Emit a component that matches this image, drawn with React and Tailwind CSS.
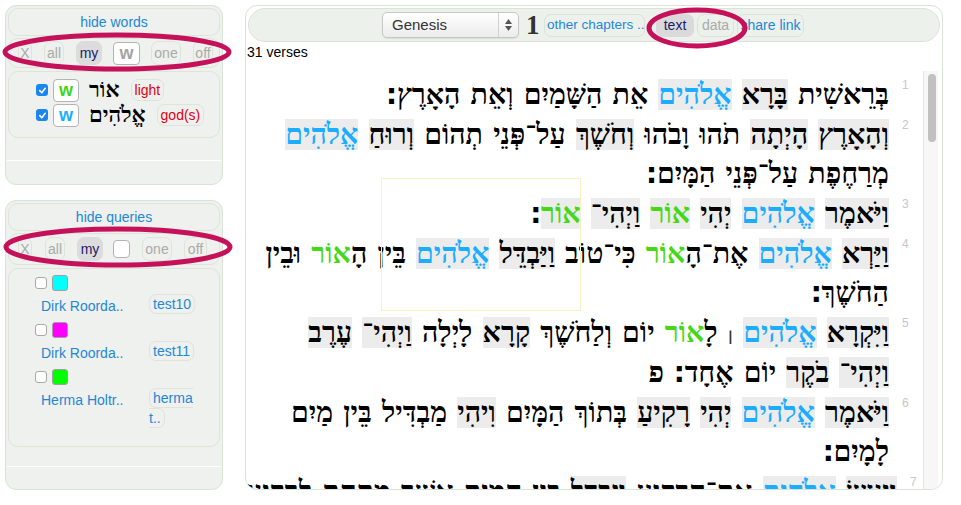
import React from 'react';

const HEB = "font-['Liberation_Serif','DejaVu_Sans',serif]";

// each word: parts split by '|', flag prefix: g = gray bg, b = blue, n = green
const lines = [
    { v: 1, w: ['בְּרֵאשִׁית', 'g:בָּרָא', 'gb:אֱלֹהִים', 'אֵת', 'הַשָּׁמַיִם', 'וְאֵת', 'הָאָרֶץ׃'] },
    { v: 2, w: ['g:וְהָאָרֶץ', 'g:הָיְתָה', 'תֹהוּ', 'וָבֹהוּ', 'g:וְחֹשֶׁךְ', 'עַל־פְּנֵי', 'תְהוֹם', 'g:וְרוּחַ', 'gb:אֱלֹהִים'] },
    { w: ['מְרַחֶפֶת', 'עַל־פְּנֵי', 'הַמָּיִם׃'] },
    { v: 3, w: ['g:וַיֹּאמֶר', 'gb:אֱלֹהִים', 'g:יְהִי', 'gn:אוֹר', 'g:וַיְהִי־', 'gn:אוֹר|׃'] },
    { v: 4, w: ['g:וַיַּרְא', 'gb:אֱלֹהִים', 'אֶת־הָ|n:אוֹר', 'כִּי־טוֹב', 'g:וַיַּבְדֵּל', 'gb:אֱלֹהִים', 'בֵּין', 'הָ|n:אוֹר', 'וּבֵין'] },
    { w: ['הַחֹשֶׁךְ׃'] },
    { v: 5, w: ['g:וַיִּקְרָא', 'gb:אֱלֹהִים', '׀', 'לָ|n:אוֹר', 'יוֹם', 'וְלַחֹשֶׁךְ', 'g:קָרָא', 'לָיְלָה', 'g:וַיְהִי־', 'g:עֶרֶב'] },
    { w: ['g:וַיְהִי־', 'g:בֹקֶר', 'יוֹם', 'אֶחָד׃', 'פ'] },
    { v: 6, w: ['g:וַיֹּאמֶר', 'gb:אֱלֹהִים', 'g:יְהִי', 'g:רָקִיעַ', 'בְּתוֹךְ', 'הַמָּיִם', 'g:וִיהִי', 'מַבְדִּיל', 'בֵּין', 'מַיִם'] },
    { w: ['לָמָיִם׃'] },
    { v: 7, w: ['g:וַיַּעַשׂ', 'gb:אֱלֹהִים', 'אֶת־הָרָקִיעַ', 'g:וַיַּבְדֵּל', 'בֵּין', 'הַמַּיִם', 'אֲשֶׁר', 'מִתַּחַת', 'לָרָקִיעַ'] },
];

const queries = [
    { color: 'bg-[#00ffff]', name: 'Dirk Roorda..', q: 'test10' },
    { color: 'bg-[#ff00ff]', name: 'Dirk Roorda..', q: 'test11' },
    { color: 'bg-[#00ff00]', name: 'Herma Holtr..', q: 'herma t..' },
];

// sof pasuq and paseq are missing / oversized in Liberation Serif
const punct = (t) => t.split(/([׃׀])/).map((s, i) => {
    if (s === '׃') return <span key={i} className="font-['DejaVu_Sans'] font-bold">{s}</span>;
    if (s === '׀') return <span key={i} className="font-['DejaVu_Sans'] font-normal text-[18px] text-[#333]">{s}</span>;
    return s;
});

const Part = ({ text }) => {
    const i = text.indexOf(':');
    const flags = i > -1 ? text.slice(0, i) : '';
    const t = i > -1 ? text.slice(i + 1) : text;
    let cls = '';
    if (flags.includes('g')) cls += ' bg-[#ececec]';
    if (flags.includes('b')) cls += ' text-[#1dadff]';
    if (flags.includes('n')) cls += ' text-[#46d818]';
    return <span className={cls}>{punct(t)}</span>;
};

const Word = ({ w }) => (
    <span>{w.split('|').map((p, i) => <Part key={i} text={p} />)}</span>
);

const Check = ({ on }) => on ? (
    <span className="w-[12px] h-[12px] rounded-[3px] bg-[#1b86f1] flex items-center justify-center">
        <svg width="9" height="9" viewBox="0 0 10 10"><path d="M2 5.2 L4.2 7.4 L8 2.6" fill="none" stroke="white" strokeWidth="1.8" strokeLinecap="round" strokeLinejoin="round" /></svg>
    </span>
) : (
    <span className="w-[12px] h-[12px] rounded-[3px] bg-white border border-[#a9a9a9]" />
);

const Tiny = ({ w, children, active }) => (
    <span className={`h-[24px] ${w} rounded-[7px] border flex items-center justify-center text-[14px] ${active ? 'bg-[#dcdcdc] border-[#dcdcdc] text-[#1b1b6a]' : 'border-[#dde5da] text-[#aaaaaa]'}`}>
        {children}
    </span>
);

const Panel = ({ title, h, children, lineGap }) => (
    <div className={`${h} rounded-[11px] border border-[#d9e3d6] bg-[#eef1ed] p-[2px] flex flex-col`}>
        <div className="h-[28px] rounded-[10px] border border-[#dde5da] flex items-center justify-center text-[14px] text-[#1f87d6]">{title}</div>
        {children}
        <div className={`${lineGap} h-px bg-white mx-[-1px]`} />
    </div>
);

export default function App() {
    return (
        <div className="relative w-[961px] h-[505px] bg-white overflow-hidden font-['Liberation_Sans',Arial,sans-serif] text-black">
            <div className="flex pt-[5px] pl-[5px]">
                {/* left column */}
                <div className="w-[218px] flex flex-col gap-[15px]">
                    <Panel title="hide words" h="h-[180px]" lineGap="mt-[22px]">
                        <div className="mt-[2px] h-[30px] rounded-[10px] border border-[#dde5da] flex items-center pl-[9px]">
                            <Tiny w="w-[14px]">X</Tiny>
                            <span className="ml-[12px]"><Tiny w="w-[20px]">all</Tiny></span>
                            <span className="ml-[12px]"><Tiny w="w-[26px]" active>my</Tiny></span>
                            <span className="ml-[11px] w-[27px] h-[23px] bg-white border border-[#b4b4b4] rounded-[4px] flex items-center justify-center text-[18px] font-bold text-[#a3a3a3]">w</span>
                            <span className="ml-[11px]"><Tiny w="w-[30px]">one</Tiny></span>
                            <span className="ml-[12px]"><Tiny w="w-[20px]">off</Tiny></span>
                        </div>
                        <div className="mt-[3px] h-[67px] rounded-[10px] border border-[#dde5da] pt-[6px] pl-[27px] flex flex-col gap-[1px]">
                            {[
                                { c: 'text-[#3fd31c]', he: 'אוֹר', g: 'light' },
                                { c: 'text-[#1dadff]', he: 'אֱלֹהִים', g: 'god(s)' },
                            ].map((r, i) => (
                                <div key={i} className="h-[24px] flex items-center">
                                    <Check on />
                                    <span className={`ml-[5px] w-[26px] h-[23px] bg-white border border-[#b4b4b4] rounded-[4px] flex items-center justify-center text-[18px] font-bold ${r.c}`}>w</span>
                                    <span dir="rtl" className={`ml-[10px] ${HEB} font-bold text-[22px] leading-none`}>{r.he}</span>
                                    <span className="ml-[11px] h-[22px] px-[3px] rounded-[7px] border border-[#dde5da] flex items-center text-[14px] text-[#e4000f]">{r.g}</span>
                                </div>
                            ))}
                        </div>
                    </Panel>

                    <Panel title="hide queries" h="h-[290px]" lineGap="mt-[19px]">
                        <div className="mt-[2px] h-[32px] rounded-[10px] border border-[#dde5da] flex items-center pl-[9px]">
                            <Tiny w="w-[14px]">X</Tiny>
                            <span className="ml-[13px]"><Tiny w="w-[20px]">all</Tiny></span>
                            <span className="ml-[12px]"><Tiny w="w-[26px]" active>my</Tiny></span>
                            <span className="ml-[10px] w-[17px] h-[18px] bg-white border border-[#b4b4b4] rounded-[4px]" />
                            <span className="ml-[12px]"><Tiny w="w-[30px]">one</Tiny></span>
                            <span className="ml-[12px]"><Tiny w="w-[23px]">off</Tiny></span>
                        </div>
                        <div className="mt-[3px] h-[179px] rounded-[10px] border border-[#dde5da] pt-[6px]">
                            {queries.map((q, i) => (
                                <div key={i} className="mb-[5px]">
                                    <div className="h-[16px] flex items-center pl-[26px]">
                                        <Check />
                                        <span className={`ml-[5px] w-[16px] h-[16px] rounded-[3px] border border-[#a0a0a0] ${q.color}`} />
                                    </div>
                                    <div className="mt-[3px] flex pl-[32px] text-[14px] text-[#1f87d6]">
                                        <span className="w-[108px] leading-[22px] pt-[1px]">{q.name}</span>
                                        <span className="w-[46px] leading-[20px]">
                                            <span className="border border-[#dde5da] rounded-[7px] px-[3px] py-[1px]">{q.q}</span>
                                        </span>
                                    </div>
                                </div>
                            ))}
                        </div>
                    </Panel>
                </div>

                {/* main panel */}
                <div className="ml-[22px] w-[698px] h-[485px] border border-[#d9e3d6] rounded-[12px] flex flex-col overflow-hidden">
                    <div className="mx-[2px] mt-[2px] h-[34px] rounded-[17px] bg-[#edf1ec] border border-[#dae3d7] flex items-center pl-[133px]">
                        <div className="w-[137px] h-[26px] rounded-[5px] border border-[#c6c6c6] bg-gradient-to-b from-white to-[#ececec] flex items-center shadow-[0_1px_1px_rgba(0,0,0,0.08)]">
                            <span className="flex-1 pl-[9px] text-[15px] text-[#333]">Genesis</span>
                            <span className="w-[20px] h-full border-l border-[#d2d2d2] flex flex-col items-center justify-center gap-[2px]">
                                <svg width="7" height="5" viewBox="0 0 7 5"><path d="M3.5 0 L7 5 L0 5 Z" fill="#555" /></svg>
                                <svg width="7" height="5" viewBox="0 0 7 5"><path d="M0 0 L7 0 L3.5 5 Z" fill="#555" /></svg>
                            </span>
                        </div>
                        <span className="ml-[7px] w-[13px] font-['Liberation_Serif',serif] font-bold text-[27px] leading-none text-[#333]">1</span>
                        <span className="ml-[5px] w-[101px] h-[23px] px-[2px] rounded-[7px] border border-[#dae3d7] flex items-center whitespace-nowrap text-[13.5px] text-[#1f87d6]">other chapters ..</span>
                        <span className="ml-[11px] h-[23px] w-[38px] rounded-[7px] bg-[#dadada] flex items-center justify-center text-[14px] text-[#1b1b6a]">text</span>
                        <span className="ml-[3px] h-[23px] w-[37px] rounded-[7px] border border-[#dae3d7] flex items-center justify-center text-[14px] text-[#aaaaaa]">data</span>
                        <span className="ml-[3px] h-[23px] w-[67px] rounded-[7px] border border-[#dae3d7] flex items-center justify-center whitespace-nowrap text-[14px] text-[#1f87d6]">share link</span>
                    </div>
                    <div className="h-[20px] leading-[20px] text-[14px] pl-[1px]">31 verses</div>
                    <div className="flex flex-1 min-h-0">
                        <div className="flex-1 overflow-hidden pt-[13px]">
                            {lines.map((l, i) => (
                                <div key={i} className="flex h-[39.7px]">
                                    <div dir="rtl" className={`flex-1 whitespace-nowrap text-right ${HEB} font-bold text-[28.5px] leading-[39.7px] [word-spacing:3px]`}>
                                        {l.w.map((w, j) => (
                                            <React.Fragment key={j}>{j > 0 && ' '}<Word w={w} /></React.Fragment>
                                        ))}
                                    </div>
                                    <div className="w-[34px] pl-[13px] pt-[4px] text-[12px] leading-none text-[#c8c8c8]">{l.v || ''}</div>
                                </div>
                            ))}
                        </div>
                        <div className="w-[15px] mt-[9px] mr-[4px] bg-[#f7f7f7] border-l border-[#e4e4e4] pt-[3px] pl-[4px]">
                            <div className="w-[8px] h-[68px] rounded-full bg-[#c1c1c1]" />
                        </div>
                    </div>
                </div>
            </div>

            {/* faint selection box */}
            <div className="absolute left-[381px] top-[178px] w-[200px] h-[133px] border border-[#f3f3c4] pointer-events-none" />

            {/* annotation ellipses */}
            <svg className="absolute inset-0 pointer-events-none" width="961" height="505">
                <ellipse cx="117" cy="52" rx="112" ry="17" fill="none" stroke="#c5115a" strokeWidth="5" />
                <ellipse cx="118" cy="247" rx="112" ry="18" fill="none" stroke="#c5115a" strokeWidth="5" />
                <ellipse cx="697" cy="28" rx="48" ry="18" fill="none" stroke="#c5115a" strokeWidth="5" />
            </svg>
        </div>
    );
}
